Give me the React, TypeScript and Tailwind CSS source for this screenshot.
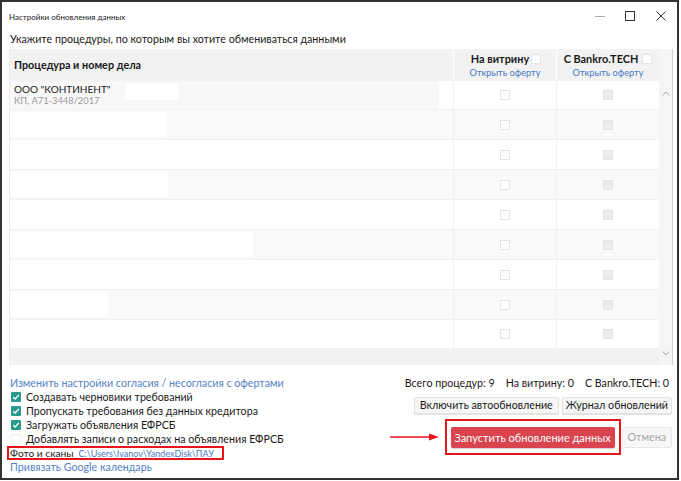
import React from "react"

const ROWS = [
  { h: 29, gray: true, block: 0, first: true },
  { h: 30, gray: true, block: 156 },
  { h: 30, gray: false, block: 0 },
  { h: 30, gray: true, block: 158 },
  { h: 30, gray: false, block: 0 },
  { h: 30, gray: true, block: 243 },
  { h: 30, gray: false, block: 0 },
  { h: 30, gray: true, block: 98 },
  { h: 29, gray: false, block: 0 },
]

const OPTIONS = [
  { label: "Создавать черновики требований", checked: true },
  { label: "Пропускать требования без данных кредитора", checked: true },
  { label: "Загружать объявления ЕФРСБ", checked: true },
  { label: "Добавлять записи о расходах на объявления ЕФРСБ", checked: false },
]

function Box({ disabled }: { disabled?: boolean }) {
  return (
    <span
      className={
        disabled
          ? "block w-[10px] h-[10px] bg-[#ececec] border border-[#e2e2e2]"
          : "block w-[10px] h-[10px] bg-white border border-[#e4e4e4]"
      }
    />
  )
}

function Check({ checked }: { checked: boolean }) {
  if (!checked) {
    return <span className="block w-[10px] h-[10px] bg-white border border-[#f0f0f0]" />
  }
  return (
    <span className="flex items-center justify-center w-[10px] h-[10px] bg-[#279c8c] rounded-[1px]">
      <svg width="8" height="8" viewBox="0 0 8 8">
        <path d="M1.3 4.2 L3.2 6 L6.8 1.9" fill="none" stroke="white" strokeWidth="1.4" />
      </svg>
    </span>
  )
}

export default function App() {
  return (
    <div className="w-[681px] h-[481px] bg-white font-['Lato',sans-serif] text-[#1a1a1a] whitespace-nowrap">
      <div className="w-[679px] h-[480px] border-2 border-[#333] bg-white flex flex-col">
        {/* title bar */}
        <div className="h-[28px] flex items-center justify-between pl-[7px]">
          <span className="text-[8px] text-[#222] mt-[2px]">Настройки обновления данных</span>
          <div className="flex items-center h-full">
            <div className="w-[30px] flex justify-center">
              <svg width="10" height="10" viewBox="0 0 10 10">
                <path d="M0 5.5 H10" stroke="#b0b0b0" strokeWidth="1" />
              </svg>
            </div>
            <div className="w-[30px] flex justify-center">
              <svg width="10" height="10" viewBox="0 0 10 10">
                <rect x="0.5" y="0.5" width="9" height="9" fill="none" stroke="#333" strokeWidth="1" />
              </svg>
            </div>
            <div className="w-[32px] flex justify-center">
              <svg width="10" height="10" viewBox="0 0 10 10">
                <path d="M0.5 0.5 L9.5 9.5 M9.5 0.5 L0.5 9.5" stroke="#333" strokeWidth="1" />
              </svg>
            </div>
          </div>
        </div>

        {/* instruction */}
        <div className="h-[18px] flex items-center pl-[8px] text-[10.7px] leading-none">
          Укажите процедуры, по которым вы хотите обмениваться данными
        </div>

        {/* table */}
        <div className="mt-px ml-[7px] w-[664px] h-[316px] flex border-l border-[#ebebeb] border-r border-r-[#d2d2d2]">
          <div className="flex-1 flex flex-col">
            <div className="h-[32px] flex bg-[#f2f2f2]">
              <div className="w-[443px] flex items-center pl-[4px] text-[10.8px] font-bold">
                Процедура и номер дела
              </div>
              <div className="w-[103px] border-l border-white flex flex-col items-center justify-center">
                <div className="flex items-center gap-[2px] text-[10.9px] font-bold leading-[15px] pl-[2px]">
                  На витрину <Box />
                </div>
                <div className="text-[9.2px] text-[#4a78c0] leading-[13px]">Открыть оферту</div>
              </div>
              <div className="w-[103px] border-l border-white flex flex-col items-center justify-center">
                <div className="flex items-center gap-[4px] text-[10.9px] font-bold leading-[15px]">
                  C Bankro.TECH <Box />
                </div>
                <div className="text-[9.2px] text-[#4a78c0] leading-[13px]">Открыть оферту</div>
              </div>
            </div>

            {ROWS.map((r, i) => (
              <div
                key={i}
                style={{ height: r.h }}
                className={
                  r.gray
                    ? "flex border-b border-[#f0f0f0] bg-[#f9f9f9]"
                    : "flex border-b border-[#f0f0f0] bg-white"
                }
              >
                <div className="w-[443px] flex items-center">
                  {r.first ? (
                    <div className="flex h-full w-full">
                      <div className="relative flex-1 bg-[#f8f8f8] pl-[4px] flex flex-col justify-center">
                        <div className="text-[10px] leading-[12px]">ООО "КОНТИНЕНТ"</div>
                        <div className="text-[9.3px] leading-[12px] text-[#9a9a9a]">КП, А71-3448/2017</div>
                        <div className="absolute left-[115px] top-[2px] w-[53px] h-[17px] bg-white" />
                      </div>
                      <div className="w-[14px] bg-white" />
                    </div>
                  ) : r.block ? (
                    <div className="h-[25px] bg-white" style={{ width: r.block }} />
                  ) : null}
                </div>
                <div
                  className={
                    r.first
                      ? "w-[103px] border-l border-[#f0f0f0] bg-white flex items-center justify-center"
                      : "w-[103px] border-l border-[#f0f0f0] flex items-center justify-center"
                  }
                >
                  <Box />
                </div>
                <div
                  className={
                    r.first
                      ? "w-[103px] border-l border-[#f0f0f0] bg-white flex items-center justify-center"
                      : "w-[103px] border-l border-[#f0f0f0] flex items-center justify-center"
                  }
                >
                  <Box disabled />
                </div>
              </div>
            ))}
            <div className="flex-1 bg-[#f2f2f2]" />
          </div>

          {/* scrollbar */}
          <div className="w-[13px] bg-[#f5f5f5] flex flex-col items-center justify-between pt-[42px] pb-[9px]">
            <svg width="8" height="5" viewBox="0 0 8 5">
              <path d="M0.5 4.5 L4 1 L7.5 4.5" fill="none" stroke="#a8a8a8" strokeWidth="1" />
            </svg>
            <svg width="8" height="5" viewBox="0 0 8 5">
              <path d="M0.5 0.5 L4 4 L7.5 0.5" fill="none" stroke="#a8a8a8" strokeWidth="1" />
            </svg>
          </div>
        </div>

        {/* bottom */}
        <div className="mt-[11px] flex justify-between pl-[8px] pr-[5px] text-[10.7px]">
          <div className="flex flex-col">
            <div className="h-[14px] flex items-center text-[#5482c4] leading-none">
              Изменить настройки согласия / несогласия с офертами
            </div>
            {OPTIONS.map((o) => (
              <div key={o.label} className="h-[14px] flex items-center gap-[5px] pl-px leading-none">
                <Check checked={o.checked} />
                {o.label}
              </div>
            ))}
            <div className="h-[14px] -ml-[3px] w-[217px] border-2 border-[#e8141b] flex items-center pl-[1px] leading-none">
              <span className="text-[10.2px]">Фото и сканы</span>
              <span className="ml-[5px] text-[9px] text-[#4a78c0]">C:\Users\Ivanov\YandexDisk\ПАУ</span>
            </div>
            <div className="h-[14px] flex items-center text-[#5482c4] leading-none">
              Привязать Google календарь
            </div>
          </div>

          <div className="flex flex-col items-end">
            <div className="h-[14px] flex items-center gap-[11px] pr-[3px] leading-none">
              <span>Всего процедур: 9</span>
              <span>На витрину: 0</span>
              <span>С Bankro.TECH: 0</span>
            </div>
            <div className="mt-[7px] flex gap-[3px]">
              <button className="h-[17px] px-[5px] bg-[#f6f6f6] border border-[#e2e2e2] rounded-[2px] shadow-[0_1px_1px_rgba(0,0,0,0.12)] leading-none">
                Включить автообновление
              </button>
              <button className="h-[17px] px-[3px] bg-[#f6f6f6] border border-[#e2e2e2] rounded-[2px] shadow-[0_1px_1px_rgba(0,0,0,0.12)] leading-none">
                Журнал обновлений
              </button>
            </div>
            <div className="mt-[5px] flex items-center">
              <svg width="50" height="10" viewBox="0 0 50 10" className="mr-[5px]">
                <path d="M0 5 H42" stroke="#e8141b" strokeWidth="1.5" />
                <path d="M39 1.5 L49 5 L39 8.5 Z" fill="#e8141b" />
              </svg>
              <div className="h-[36px] border-2 border-[#e8141b] flex items-center px-[4px]">
                <button className="h-[21px] w-[164px] bg-[#d9444e] text-white text-[11px] rounded-[2px] shadow-[0_1px_1px_rgba(0,0,0,0.2)] leading-none">
                  Запустить обновление данных
                </button>
              </div>
              <button className="ml-px h-[21px] px-[5px] bg-[#f7f7f7] border border-[#e8e8e8] rounded-[2px] text-[#a8a8a8] leading-none">
                Отмена
              </button>
            </div>
          </div>
        </div>
      </div>
    </div>
  )
}
